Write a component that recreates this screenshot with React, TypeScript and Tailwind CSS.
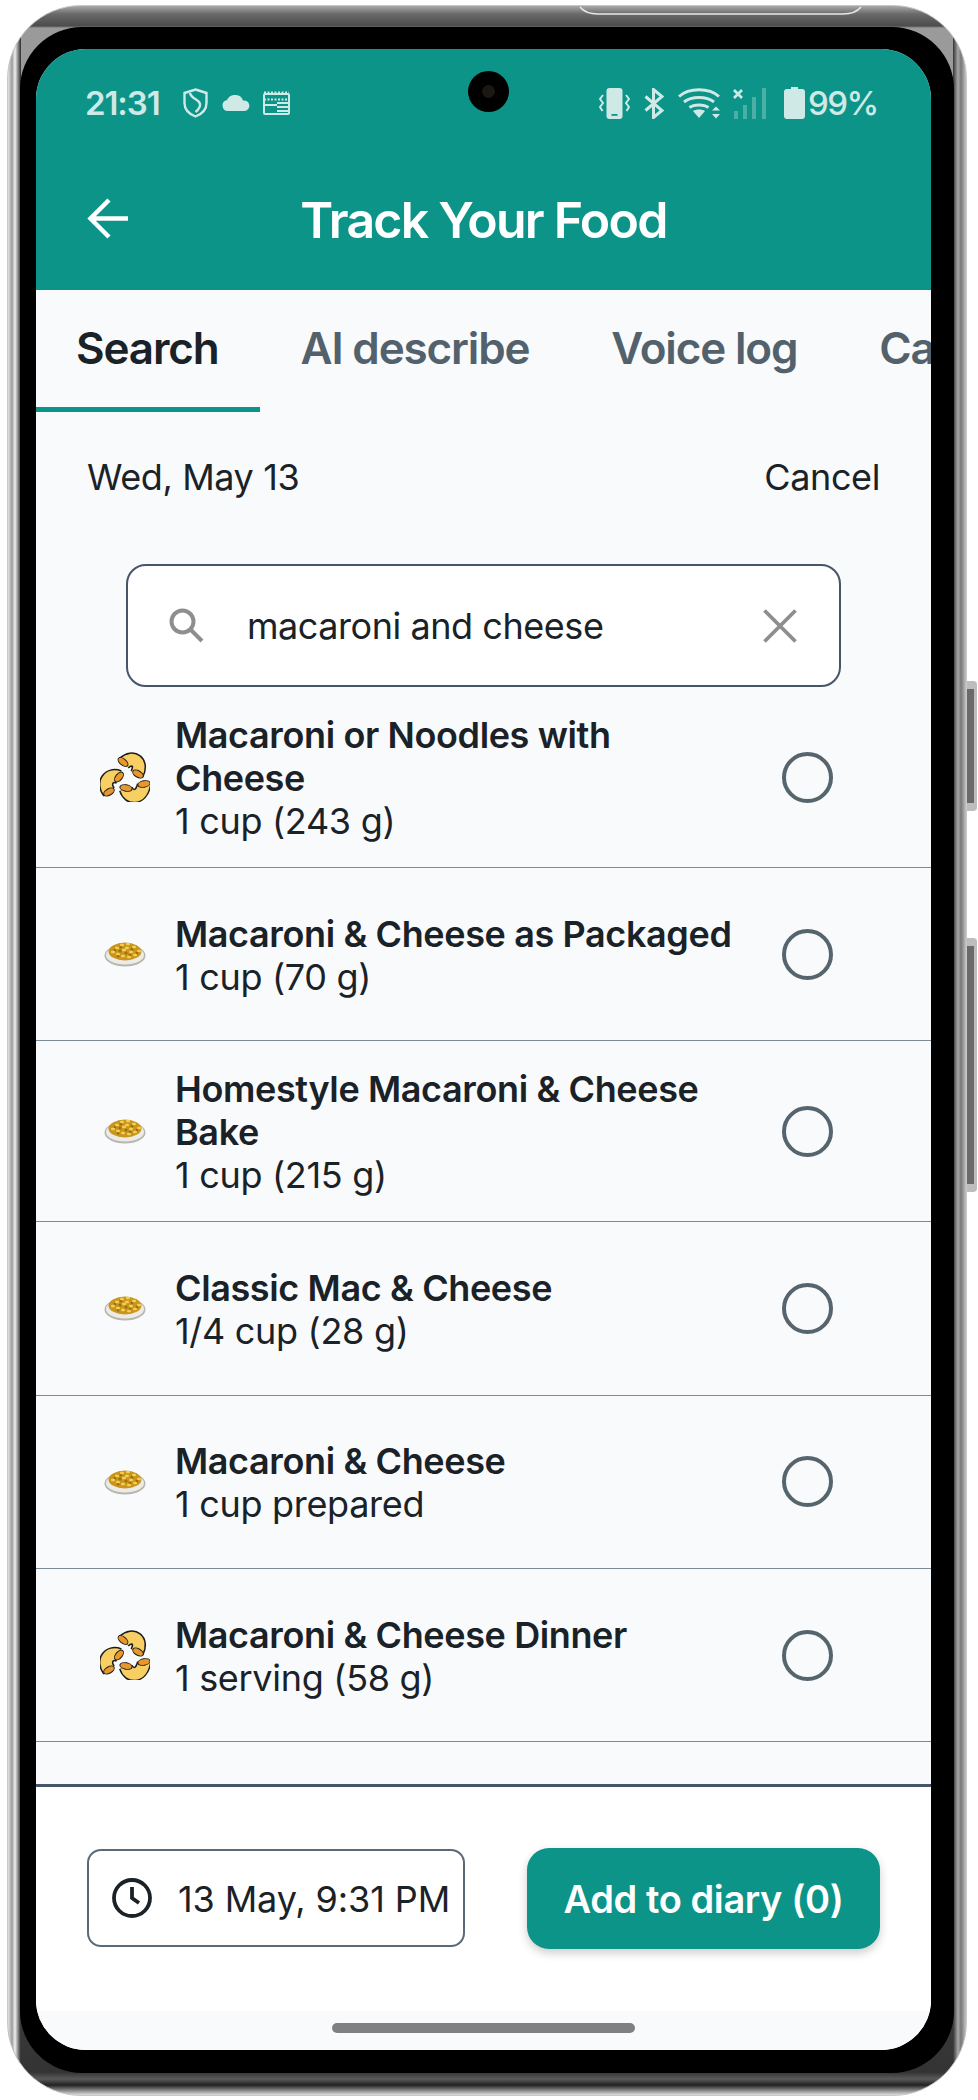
const foods = [
  { lines: ['Macaroni or Noodles with', 'Cheese'], serving: '1 cup (243 g)', icon: 'mac', tall: true },
  { lines: ['Macaroni & Cheese as Packaged'], serving: '1 cup (70 g)', icon: 'plate' },
  { lines: ['Homestyle Macaroni & Cheese', 'Bake'], serving: '1 cup (215 g)', icon: 'plate', tall: true },
  { lines: ['Classic Mac & Cheese'], serving: '1/4 cup (28 g)', icon: 'plate' },
  { lines: ['Macaroni & Cheese'], serving: '1 cup prepared', icon: 'plate' },
  { lines: ['Macaroni & Cheese Dinner'], serving: '1 serving (58 g)', icon: 'mac' },
];

function MacIcon() {
  const tubes = ['M24 11C33 3 43 10 37 22', 'M19 25C9 21 2 31 9 40', 'M26 37C29 47 41 47 44 33'];
  return (
    <svg width="50" height="50" viewBox="0 0 50 50" fill="none">
      {tubes.map((d) => (
        <g key={d}>
          <path d={d} stroke="#1c1c1c" strokeWidth="14.5" />
          <path d={d} stroke="#f7cf63" strokeWidth="11.5" />
        </g>
      ))}
      <ellipse cx="23" cy="10" rx="5.8" ry="3.2" transform="rotate(40 23 10)" fill="#e8982a" stroke="#1c1c1c" />
      <ellipse cx="38" cy="22" rx="5.8" ry="3.2" transform="rotate(30 38 22)" fill="#e8982a" stroke="#1c1c1c" />
      <ellipse cx="19" cy="25" rx="5.8" ry="3.2" transform="rotate(-50 19 25)" fill="#e8982a" stroke="#1c1c1c" />
      <ellipse cx="9" cy="40" rx="5.8" ry="3.2" transform="rotate(-30 9 40)" fill="#e8982a" stroke="#1c1c1c" />
      <ellipse cx="26" cy="36" rx="6.2" ry="3.2" transform="rotate(10 26 36)" fill="#e8982a" stroke="#1c1c1c" />
      <ellipse cx="44" cy="32" rx="6.2" ry="3.2" transform="rotate(-10 44 32)" fill="#e8982a" stroke="#1c1c1c" />
    </svg>
  );
}

function PlateIcon() {
  const light = [[9, 11], [13, 7], [18, 4], [24, 3], [30, 6], [35, 10], [14, 13], [20, 9], [27, 11], [19, 15], [25, 16], [31, 14], [23, 7]];
  const dark = [[11, 9], [16, 10], [22, 12], [28, 8], [33, 12], [17, 6], [26, 14], [14, 15]];
  return (
    <svg width="42" height="26" viewBox="0 0 42 26" fill="none">
      <ellipse cx="21" cy="14.5" rx="20.5" ry="11" fill="#b9b6b0" />
      <ellipse cx="21" cy="14" rx="19" ry="9.5" fill="#ecebe6" />
      <ellipse cx="21" cy="10.5" rx="16.5" ry="9" fill="#c9951f" />
      {dark.map(([x, y]) => (
        <circle key={`d${x}-${y}`} cx={x} cy={y} r="1.5" fill="#9c6f12" />
      ))}
      {light.map(([x, y]) => (
        <rect key={`l${x}-${y}`} x={x - 2} y={y - 1.2} width="4" height="2.4" rx="1.2" fill="#f3cf4e" />
      ))}
    </svg>
  );
}

function StatusLeftIcons() {
  return (
    <div className="flex items-center text-[#cfe9e6]">
      <svg className="ml-[25px]" width="25" height="30" viewBox="0 0 25 30" fill="none" stroke="currentColor" strokeWidth="2.4">
        <path d="M12.5 1.5 23.5 5v10c0 6.5-4.5 11-11 13.5C6 26 1.5 21.5 1.5 15V5z" />
        <path d="M7 5c1 6 9 6 10 11 .5 3-2 6-4.5 8" />
      </svg>
      <svg className="ml-[14px]" width="28" height="16" viewBox="0 0 28 16" fill="currentColor">
        <path d="M6 16a5.5 5.5 0 0 1-1-10.9A9 9 0 0 1 14 0a8 8 0 0 1 7 5.5A5.3 5.3 0 0 1 23 16z" />
      </svg>
      <svg className="ml-[13px]" width="27" height="24" viewBox="0 0 27 24" fill="none" stroke="currentColor" strokeWidth="2">
        <rect x="1" y="3" width="25" height="20" rx="1" />
        <path d="M1 8.5h25M1 1.5h25" strokeDasharray="2 1.5" />
        <path d="M14 12h12M14 16h12M14 20h12M1 14h13" />
      </svg>
    </div>
  );
}

function StatusRightIcons() {
  return (
    <div className="flex items-center text-[#cfe9e6]">
      <svg width="31" height="31" viewBox="0 0 31 31" fill="none">
        <rect x="7.5" y="0" width="16" height="31" rx="3" fill="currentColor" />
        <rect x="12.5" y="26" width="6" height="1.8" fill="#0d9488" />
        <path d="M4 7 1 11l3 4-3 4 2.5 4M27 7l3 4-3 4 3 4-2.5 4" stroke="currentColor" strokeWidth="2" />
      </svg>
      <svg className="ml-[14px]" width="20" height="31" viewBox="0 0 20 31" fill="none" stroke="currentColor" strokeWidth="3">
        <path d="M1.5 8.5 18 22.5 9.5 29.5V1.5L18 8.5 1.5 22.5" />
      </svg>
      <svg className="ml-[14px]" width="42" height="31" viewBox="0 0 42 31" fill="none">
        <path d="M1 8.5C11-.5 31-.5 41 8.5M6 14c7.5-6 22.5-6 30 0M11.5 19.5c4.5-3.5 14.5-3.5 19 0" stroke="currentColor" strokeWidth="3" />
        <path d="M15 23c3-2 9-2 12 0l-6 7z" fill="currentColor" />
        <path d="M34 22.5l4-4 4 4zM34 26h8l-4 4.5z" fill="currentColor" />
      </svg>
      <svg className="ml-[13px]" width="35" height="31" viewBox="0 0 35 31" fill="none">
        <path d="M1 2l8 8M9 2l-8 8" stroke="currentColor" strokeWidth="2.6" />
        <path d="M3 31v-8M12 31V17M21 31V9M31 31V0" stroke="#cfe9e6" strokeOpacity="0.32" strokeWidth="4" />
      </svg>
      <svg className="ml-[16px]" width="21" height="32" viewBox="0 0 21 32" fill="currentColor">
        <path d="M7 0h7v2h4a3 3 0 0 1 3 3v24a3 3 0 0 1-3 3H3a3 3 0 0 1-3-3V5a3 3 0 0 1 3-3h4z" />
      </svg>
      <span className="ml-[3px] w-[69px] whitespace-nowrap text-[33px] font-medium leading-none tracking-[-1.5px]">99%</span>
    </div>
  );
}

export default function App() {
  return (
    <div className="relative h-[2100px] w-[978px] overflow-hidden bg-white font-['Inter',sans-serif]">
      {/* Side buttons */}
      <div className="absolute left-[962px] top-[681px] h-[130px] w-[15px] rounded-r-[4px] border-y-[8px] border-r-[3px] border-[#bdbdbd] bg-[#6a6a6a]" />
      <div className="absolute left-[962px] top-[938px] h-[254px] w-[15px] rounded-r-[4px] border-y-[8px] border-r-[3px] border-[#bdbdbd] bg-[#6a6a6a]" />

      {/* Phone body */}
      <div className="relative ml-[7px] mt-[5px] h-[2091px] w-[960px] rounded-[74px] border border-[#c8c8c8] bg-[linear-gradient(90deg,#e4e4e4_0,#9c9c9c_4px,#f0f0f0_7px,#8a8a8a_10px,#2a2a2a_13px,transparent_13px,transparent_calc(100%-13px),#333_calc(100%-13px),#a8a8a8_calc(100%-8px),#777_calc(100%-5px),#c4c4c4_100%),linear-gradient(180deg,#a8a8a8_0,#6a6a6a_8px,#4c4c4c_20px,#9a9a9a_22px,#aaa_50%,#333_calc(100%-23px),#5a5a5a_calc(100%-16px),#222_calc(100%-10px),#ddd_100%)] pb-[22px] pl-[12px] pr-[12px] pt-[21px]">
        <svg className="absolute left-[571px] top-0" width="283" height="10" viewBox="0 0 283 10" fill="none">
          <path d="M1 1c4 5 10 7 18 7h245c8 0 14-2 18-7" stroke="#e8e8e8" strokeWidth="1.5" />
        </svg>

        {/* Bezel */}
        <div className="h-full rounded-[62px] bg-black pb-[23px] pl-[16px] pr-[23px] pt-[22px]">
          {/* Screen */}
          <div className="relative flex h-[2001px] w-[895px] flex-col overflow-hidden rounded-[50px] bg-[#f8fafc]">
            <div className="absolute left-[432px] top-[22px] h-[41px] w-[41px] rounded-full bg-black">
              <div className="ml-[14px] mt-[14px] h-[13px] w-[13px] rounded-full bg-[#1c1712]" />
            </div>

            {/* Header */}
            <div className="h-[241px] shrink-0 bg-[#0d9488]">
              <div className="flex h-[106px] items-center justify-between pl-[49px] pr-[54px] pt-[2px]">
                <div className="flex items-center">
                  <span className="w-[73px] text-[33px] font-semibold leading-none tracking-[-1.1px] text-[#cfe9e6]">21:31</span>
                  <StatusLeftIcons />
                </div>
                <StatusRightIcons />
              </div>
              <div className="relative flex h-[135px] items-center justify-center pb-[6px]">
                <svg className="absolute left-[51px] top-[43px]" width="41" height="41" viewBox="0 0 41 41" fill="none" stroke="white" strokeWidth="4.5">
                  <path d="M41 20.5H4M22 2 3.5 20.5 22 39" />
                </svg>
                <h1 className="text-[50px] font-semibold leading-none tracking-[-1.75px] text-white">Track Your Food</h1>
              </div>
            </div>

            {/* Tabs */}
            <div className="flex h-[122px] shrink-0 overflow-hidden text-[44px] font-semibold tracking-[-1.15px] text-[#52616b]">
              <div className="shrink-0 border-b-[5px] border-[#0d9488] pl-[40px] pr-[41px] pt-[28px] leading-[60px] text-[#1a2228]">Search</div>
              <div className="shrink-0 px-[41px] pt-[28px] leading-[60px]">AI describe</div>
              <div className="shrink-0 px-[41px] pt-[28px] leading-[60px]">Voice log</div>
              <div className="shrink-0 px-[41px] pt-[28px] leading-[60px]">Camera</div>
            </div>

            {/* Date row */}
            <div className="flex h-[152px] shrink-0 items-start justify-between px-[51px] pt-[43px] text-[36px] leading-[44px] tracking-[-0.4px] text-[#1a2228]">
              <span>Wed, May 13</span>
              <span>Cancel</span>
            </div>

            {/* Search box */}
            <div className="mx-[90px] flex h-[123px] shrink-0 items-center rounded-[20px] border-2 border-[#475569] bg-white pl-[41px] pr-[42px]">
              <svg width="35" height="35" viewBox="0 0 35 35" fill="none" stroke="#8e8e8e" strokeWidth="4">
                <circle cx="13.5" cy="13.5" r="11" />
                <path d="M21.5 21.5 33 33" />
              </svg>
              <span className="ml-[43px] flex-1 text-[36px] leading-none tracking-[-0.45px] text-[#1a2228]">macaroni and cheese</span>
              <svg width="34" height="34" viewBox="0 0 34 34" fill="none" stroke="#8e8e8e" strokeWidth="3.8">
                <path d="M1.5 1.5 32.5 32.5M32.5 1.5 1.5 32.5" />
              </svg>
            </div>

            {/* Results */}
            <div className="flex-1">
              {foods.map((food) => (
                <div
                  key={food.lines.join(' ')}
                  className={`flex items-center border-b-[1.5px] border-[#7c8a94] pl-[45px] pr-[98px] ${food.tall ? 'h-[181px]' : 'h-[173.3px]'}`}
                >
                  <div className="flex w-[94px] shrink-0 items-center justify-center pr-[6px]">
                    {food.icon === 'mac' ? <MacIcon /> : <PlateIcon />}
                  </div>
                  <div className="min-w-0 flex-1 whitespace-nowrap pt-[3px] text-[36px] leading-[43px] text-[#1a2228]">
                    {food.lines.map((line) => (
                      <div key={line} className="font-semibold tracking-[-0.38px]">{line}</div>
                    ))}
                    <div className="tracking-[-0.3px]">{food.serving}</div>
                  </div>
                  <div className="h-[51px] w-[51px] shrink-0 rounded-full border-[4px] border-[#56646e]" />
                </div>
              ))}
            </div>

            {/* Footer */}
            <div className="flex h-[227px] shrink-0 items-start justify-between border-t-[3px] border-[#475569] bg-white pl-[51px] pr-[51px] pt-[61px]">
              <div className="mt-[1px] flex h-[98px] w-[378px] items-center rounded-[14px] border-2 border-[#5a6a78] pl-[23px]">
                <svg width="40" height="40" viewBox="0 0 40 40" fill="none" stroke="#1a2228" strokeWidth="3.8">
                  <circle cx="20" cy="20" r="18" />
                  <path d="M20 9v11l7 5" />
                </svg>
                <span className="ml-[26px] whitespace-nowrap pt-[2px] text-[36px] leading-none tracking-[-0.1px] text-[#1a2228]">13 May, 9:31 PM</span>
              </div>
              <button className="h-[101px] w-[353px] rounded-[22px] bg-[#0d9488] pt-[2px] text-[38px] font-semibold tracking-[-0.4px] text-white shadow-[0_4px_10px_rgba(0,0,0,0.2)]">
                Add to diary (0)
              </button>
            </div>

            {/* Nav bar */}
            <div className="flex h-[39px] shrink-0 justify-center bg-[#f8fafc] pt-[12px]">
              <div className="h-[10px] w-[303px] rounded-full bg-[#808080]" />
            </div>
          </div>
        </div>
      </div>
    </div>
  );
}
